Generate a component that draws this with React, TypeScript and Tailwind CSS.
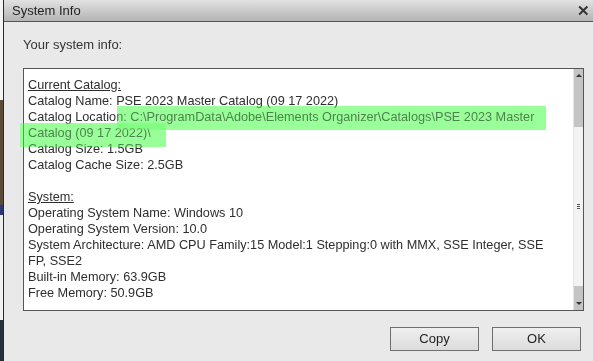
import React from "react";

const lines1 = [
  "Catalog Name: PSE 2023 Master Catalog (09 17 2022)",
  "Catalog Location: C:\\ProgramData\\Adobe\\Elements Organizer\\Catalogs\\PSE 2023 Master",
  "Catalog (09 17 2022)\\",
  "Catalog Size: 1.5GB",
  "Catalog Cache Size: 2.5GB",
];

const lines2 = [
  "Operating System Name: Windows 10",
  "Operating System Version: 10.0",
  "System Architecture: AMD CPU Family:15 Model:1 Stepping:0 with MMX, SSE Integer, SSE",
  "FP, SSE2",
  "Built-in Memory: 63.9GB",
  "Free Memory: 50.9GB",
];

function Scrollbar() {
  return (
    <div className="flex w-[10px] flex-col border-l border-[#e4e4e4] bg-[#f3f3f3]">
      <div className="flex h-[58px] justify-center bg-[#c4c4c4] pt-[5px]">
        <div className="h-0 w-0 border-x-[3px] border-b-[3px] border-x-transparent border-b-[#333]" />
      </div>
      <div className="flex flex-1 items-center justify-center">
        <div className="flex flex-col gap-[1px]">
          <div className="h-px w-[3px] bg-[#555]" />
          <div className="h-px w-[3px] bg-[#555]" />
          <div className="h-px w-[3px] bg-[#555]" />
        </div>
      </div>
      <div className="flex h-[24px] items-end justify-center bg-[#c4c4c4] pb-[5px]">
        <div className="h-0 w-0 border-x-[3px] border-t-[3px] border-x-transparent border-t-[#333]" />
      </div>
    </div>
  );
}

function Button({ label }: { label: string }) {
  return (
    <button
      type="button"
      className="h-[24px] w-[89px] border border-[#707070] bg-gradient-to-b from-[#efefef] to-[#dcdcdc] text-[13px] text-[#222]"
    >
      {label}
    </button>
  );
}

export default function App() {
  return (
    <div className="flex h-[361px] w-[593px] overflow-hidden bg-[#e9e9e9] font-['Liberation_Sans',sans-serif] text-[13px] text-[#333]">
      {/* sliver of the window behind */}
      <div className="flex w-[3px] flex-col">
        <div className="h-[100px] bg-[#f4f4f4]" />
        <div className="h-[105px] bg-[#5a4a3a]" />
        <div className="h-[10px] bg-[#2a3a70]" />
        <div className="h-[45px] bg-[#eeeeee]" />
        <div className="h-[60px] bg-[#f2f2f2]" />
        <div className="flex-1 bg-[#24313d]" />
      </div>

      <div className="relative isolate flex flex-1 flex-col border-l border-[#2a2a2a]">
        <div className="flex h-[22px] items-center justify-between border-b border-[#555] bg-gradient-to-b from-[#e2e2e2] to-[#b4b4b4] pl-[8px] pr-[3px]">
          <span className="text-[13px] text-[#222]">System Info</span>
          <span className="text-[15px] font-bold leading-none text-[#333]">✕</span>
        </div>

        <div className="flex flex-1 flex-col pl-[19px] pr-[9px]">
          <div className="mt-[15px] leading-[16px]">Your system info:</div>

          <div className="mt-[15px] flex h-[243px] border border-[#555] bg-white">
            <div className="flex-1 whitespace-nowrap pl-[4px] pt-[8px] text-[12.7px] leading-[16px] text-[#2e2e2e]">
              <div className="underline">Current Catalog:</div>
              {lines1.map((l) => (
                <div key={l}>{l}</div>
              ))}
              <div>&nbsp;</div>
              <div className="underline">System:</div>
              {lines2.map((l) => (
                <div key={l}>{l}</div>
              ))}
            </div>
            <Scrollbar />
          </div>

          <div className="mt-[16px] flex justify-end gap-[13px] pr-[3px]">
            <Button label="Copy" />
            <Button label="OK" />
          </div>
        </div>

        {/* marker highlight over the catalog path */}
        <div className="absolute left-[113px] top-[106px] h-[24px] w-[429px] bg-[#99ff99] mix-blend-multiply blur-[0.6px]" />
        <div className="absolute left-[16px] top-[123px] h-[24px] w-[146px] bg-[#99ff99] mix-blend-multiply blur-[0.6px]" />
        <div className="absolute left-[113px] top-[106px] h-[24px] w-[429px] bg-[#99ff99]/40 blur-[0.6px]" />
        <div className="absolute left-[16px] top-[123px] h-[24px] w-[146px] bg-[#99ff99]/40 blur-[0.6px]" />
      </div>
    </div>
  );
}
